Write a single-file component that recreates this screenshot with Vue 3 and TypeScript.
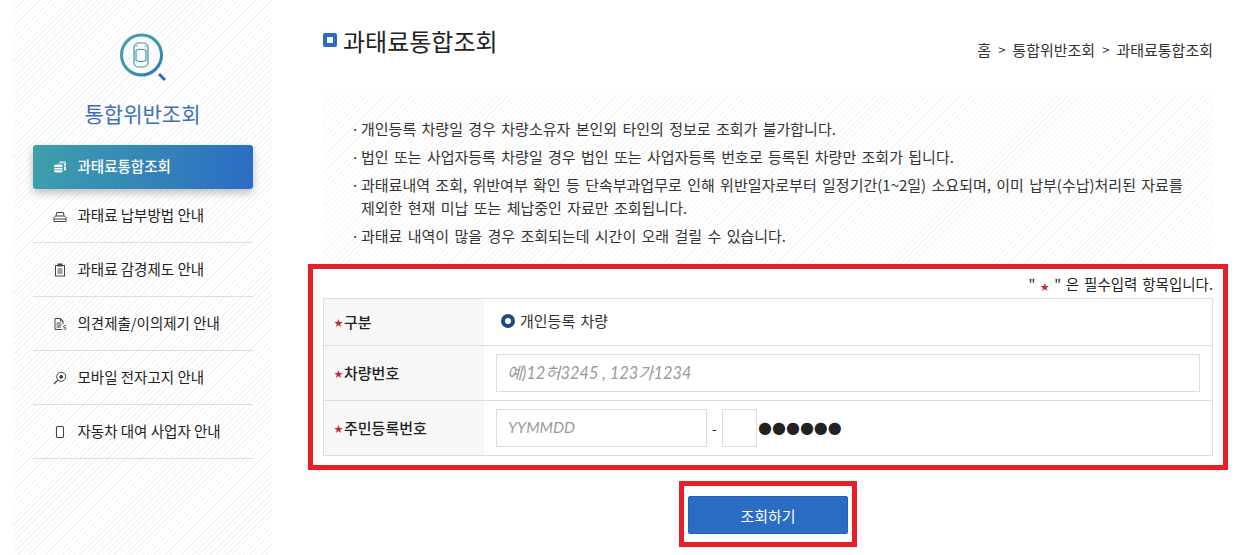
<script setup lang="ts">
const menu = [
  { label: '과태료통합조회', icon: 'coins', active: true },
  { label: '과태료 납부방법 안내', icon: 'printer' },
  { label: '과태료 감경제도 안내', icon: 'clip' },
  { label: '의견제출/이의제기 안내', icon: 'doc' },
  { label: '모바일 전자고지 안내', icon: 'search' },
  { label: '자동차 대여 사업자 안내', icon: 'phone' },
]
const notices = [
  '개인등록 차량일 경우 차량소유자 본인외 타인의 정보로 조회가 불가합니다.',
  '법인 또는 사업자등록 차량일 경우 법인 또는 사업자등록 번호로 등록된 차량만 조회가 됩니다.',
  '과태료내역 조회, 위반여부 확인 등 단속부과업무로 인해 위반일자로부터 일정기간(1~2일) 소요되며, 이미 납부(수납)처리된 자료를 제외한 현재 미납 또는 체납중인 자료만 조회됩니다.',
  '과태료 내역이 많을 경우 조회되는데 시간이 오래 걸릴 수 있습니다.',
]
</script>

<template>
  <div class="page">
    <aside class="side">
      <svg class="logo" width="52" height="52" viewBox="0 0 52 52" fill="none">
        <defs>
          <linearGradient id="lg" x1="0" y1="0" x2="1" y2="1">
            <stop offset="0" stop-color="#3ba3a8" />
            <stop offset="0.6" stop-color="#3a96aa" />
            <stop offset="1" stop-color="#2b6cc4" />
          </linearGradient>
        </defs>
        <circle cx="21.500" cy="22" r="20" stroke="url(#lg)" stroke-width="3" />
        <path d="M39 41 L45 47" stroke="#2b6cc4" stroke-width="3" />
        <rect x="14" y="10" width="14" height="24" rx="4.500" stroke="#3a93ad" stroke-width="1.200" />
        <path d="M16 17.500 Q21 15 26 17.500 V27.500 Q21 29.500 16 27.500 Z" stroke="#3a93ad" stroke-width="1.100" />
        <path d="M15.500 13 h2 M24.500 13 h2" stroke="#3a93ad" stroke-width="1" />
      </svg>
      <h2 class="side-title">통합위반조회</h2>
      <ul class="menu">
        <li v-for="m in menu" :key="m.label" class="item" :class="{ active: m.active }">
          <svg class="ico" width="14" height="14" viewBox="0 0 14 14" fill="none" stroke="currentColor" stroke-width="1">
            <template v-if="m.icon === 'coins'">
              <path fill="currentColor" stroke="none" d="M6 1.500h6a1 1 0 0 1 1 1v7a1 1 0 0 1-1 1h-1V4.500a1 1 0 0 0-1-1H6z" />
              <path fill="currentColor" stroke="none" d="M2.500 4.500h6a1 1 0 0 1 1 1v5.500a1.500 1.500 0 0 1-1.500 1.500H3a2 2 0 0 1-2-2V6a1.500 1.500 0 0 1 1.500-1.500z" />
              <path stroke="#3f88b4" stroke-width=".8" d="M1 7.500h8.500M1 9.800h8.500M5.500 3h7.500M10 6h3" />
            </template>
            <template v-else-if="m.icon === 'printer'">
              <path d="M1 12.500V8.500L2.500 7h9L13 8.500v4z M3 7l.6-3.500h6.800L11 7" />
              <path d="M1 10h12" />
            </template>
            <template v-else-if="m.icon === 'clip'">
              <rect x="2.500" y="2.500" width="9" height="10.500" />
              <rect x="5" y="1" width="4" height="2" fill="currentColor" />
              <path d="M4.500 6h5M4.500 8h5M4.500 10h5" />
            </template>
            <template v-else-if="m.icon === 'doc'">
              <path d="M9 12.500H2V1.500h5.500L10 4v3 M7.500 1.500V4H10" />
              <path d="M3.500 6h4.500M3.500 8h5M3.500 10h4.500" />
              <path stroke-width=".9" d="M13 8.500h-1.500a.9.9 0 0 0 0 1.900h.6a.9.9 0 0 1 0 1.900H10.500" />
            </template>
            <template v-else-if="m.icon === 'search'">
              <circle cx="8.200" cy="5.800" r="4.500" />
              <circle cx="8.200" cy="5.800" r="1.500" fill="currentColor" />
              <path stroke-width="1.200" d="M4.800 9.200L1 13" />
            </template>
            <template v-else>
              <rect x="3.500" y="1.500" width="7" height="11" rx="1" stroke-width="1.100" />
            </template>
          </svg>
          <span class="label">{{ m.label }}</span>
        </li>
      </ul>
    </aside>

    <main class="main">
      <div class="head">
        <h1 class="title"><i class="bullet"></i>과태료통합조회</h1>
        <nav class="crumb">
          <span>홈</span><b>&gt;</b><span>통합위반조회</span><b>&gt;</b><span>과태료통합조회</span>
        </nav>
      </div>

      <ul class="notice">
        <li v-for="n in notices" :key="n">{{ n }}</li>
      </ul>

      <section class="mark form-mark">
        <p class="req">" <em>★</em> " 은 필수입력 항목입니다.</p>
        <div class="table">
          <div class="row r1">
            <div class="th"><em>★</em><span class="th-text">구분</span></div>
            <div class="td radio-cell">
              <span class="radio"></span><span class="radio-text">개인등록 차량</span>
            </div>
          </div>
          <div class="row r2">
            <div class="th"><em>★</em><span class="th-text">차량번호</span></div>
            <div class="td">
              <input class="input wide" placeholder="예)12허3245 , 123가1234" />
            </div>
          </div>
          <div class="row r3">
            <div class="th"><em>★</em><span class="th-text">주민등록번호</span></div>
            <div class="td">
              <input class="input birth" placeholder="YYMMDD" />
              <span class="dash">-</span>
              <input class="input one" />
              <span class="dots">●●●●●●</span>
            </div>
          </div>
        </div>
      </section>

      <div class="actions">
        <div class="mark btn-mark">
          <button class="btn" type="button">조회하기</button>
        </div>
      </div>
    </main>
  </div>
</template>

<style>
html, body { margin: 0; background: #fff; }
</style>

<style scoped>
* { box-sizing: border-box; }
.page {
  display: flex;
  width: 1242px;
  height: 555px;
  overflow: hidden;
  font-family: "Noto Sans CJK KR", "Noto Sans", sans-serif;
  color: #222;
  background: #fff;
}
.side {
  width: 259px;
  height: 555px;
  margin-left: 13px;
  padding: 33px 20px 0;
  display: flex;
  flex-direction: column;
  align-items: center;
  background: repeating-linear-gradient(135deg, #fff 0, #fff 3px, #f4f4f4 3px, #f4f4f4 4px);
}
.logo { margin-left: 7px; flex: none; }
.side-title {
  margin: 13px 0 17px;
  font-size: 21px;
  line-height: 30px;
  font-weight: 400;
  color: #3f6fb8;
}
.menu { list-style: none; margin: 0; padding: 0; width: 220px; }
.item {
  display: flex;
  align-items: center;
  gap: 11px;
  height: 54px;
  padding-left: 20px;
  font-size: 14.500px;
  color: #222;
  border-bottom: 1px solid #ddd;
}
.label { margin-top: -2px; }
.ico { flex: none; color: #444; }
.item.active {
  height: 44px;
  border: 0;
  border-radius: 3px;
  color: #fff;
  font-weight: 500;
  background: linear-gradient(100deg, #3ea0aa 0%, #2b6cc4 100%);
  box-shadow: 0 4px 8px rgba(0, 0, 0, .25);
}
.item.active .ico { color: #fff; }
.item.active .label { margin-top: -4px; }
.main { width: 920px; margin-left: 36px; display: flex; flex-direction: column; }
.head { height: 95px; margin: 0 15px; display: flex; justify-content: space-between; }
.title {
  margin: 22px 0 0;
  display: flex;
  align-items: center;
  height: 36px;
  font-size: 24px;
  font-weight: 400;
  color: #222;
}
.bullet {
  width: 14px;
  height: 14px;
  margin: 0 6px 0 0;
  border: 4px solid #2b6cc4;
  border-radius: 2px;
  background: #fff;
}
.crumb { margin-top: 40px; height: 20px; font-size: 15px; line-height: 20px; color: #333; display: flex; }
.crumb b { font-weight: 400; font-size: 13px; margin: 0 7px; }
.notice {
  list-style: none;
  margin: 0 15px;
  height: 169px;
  padding: 22px 20px 0 28px;
  font-size: 15px;
  word-spacing: 2px;
  line-height: 23px;
  color: #333;
  background: repeating-linear-gradient(135deg, #fff 0, #fff 3px, #f6f6f6 3px, #f6f6f6 4px);
}
.notice li { position: relative; padding-left: 10px; margin-bottom: 5px; }
.notice li::before { content: "·"; position: absolute; left: 0; }
.mark { border: 5px solid #e81f2b; }
.form-mark { height: 206px; padding: 5px 10px 0; }
.req {
  margin: 0;
  height: 24px;
  text-align: right;
  font-size: 14.500px;
  word-spacing: 1.600px;
  line-height: 20px;
  color: #222;
}
em { font-style: normal; color: #c8283a; font-size: 9px; }
.table { border: 1px solid #ddd; }
.row { display: flex; border-bottom: 1px solid #ddd; }
.row:last-child { border-bottom: 0; }
.r1 { height: 47px; }
.r2 { height: 55px; }
.r3 { height: 54px; }
.th {
  width: 160px;
  padding-left: 10px;
  display: flex;
  align-items: center;
  gap: 1px;
  font-size: 15px;
  font-weight: 500;
  background: #f7f7f7;
}
.th-text { margin-top: -2px; }
.td { flex: 1; display: flex; align-items: center; padding-left: 12px; }
.radio-cell { padding-left: 17px; gap: 5px; font-size: 15px; word-spacing: 2px; color: #333; }
.radio-text { margin-top: -3px; }
.radio {
  width: 14px;
  height: 14px;
  margin-top: -2px;
  border-radius: 50%;
  border: 4.500px solid #1f4a80;
  background: #fff;
}
.input {
  height: 38px;
  border: 1px solid #ddd;
  padding: 0 11px 2px;
  font: italic 15.600px "Lato", "Noto Sans CJK KR", sans-serif;
  color: #222;
  background: #fff;
  outline: none;
}
.input::placeholder { color: #9a9a9a; opacity: 1; }
.wide { width: 704px; padding: 0 10px 2px; font-size: 16.400px; }
.birth { width: 211px; }
.one { width: 35px; }
.dash { margin: 0 5px 0 5px; flex: 0 0 5px; font-size: 13px; }
.dots { margin: -2px 0 0 1px; font-size: 16px; color: #222; font-family: "DejaVu Sans", sans-serif; }
.actions { display: flex; justify-content: center; margin-top: 11px; }
.btn-mark { width: 178px; height: 66px; padding: 10px 4px 0; }
.btn {
  display: block;
  width: 160px;
  height: 38px;
  border: 1px solid #2560ad;
  border-radius: 2px;
  background: #2b6cc4;
  color: #fff;
  font: 400 15px "Noto Sans CJK KR", sans-serif;
}
</style>
